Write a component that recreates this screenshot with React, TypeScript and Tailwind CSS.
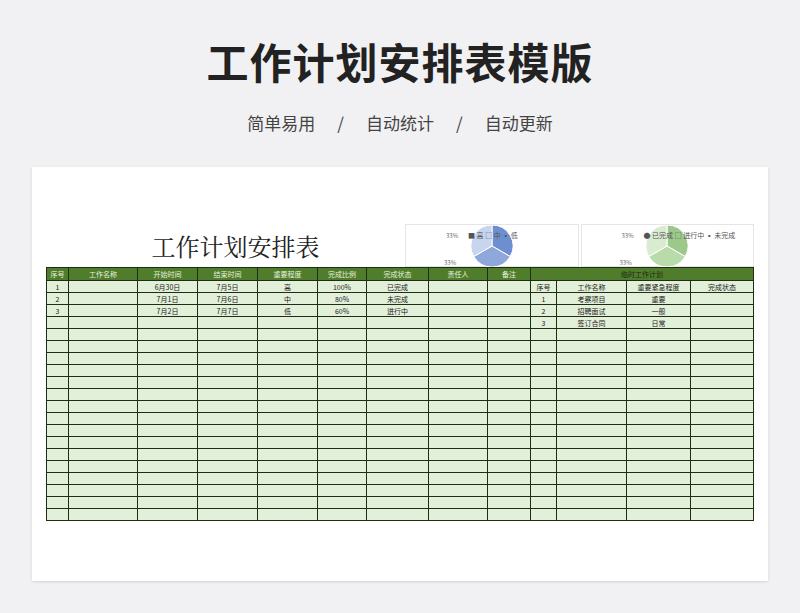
import React from "react";

const cols = [22, 69, 60, 60, 60, 49, 62, 59, 43, 26, 70, 64, 63];
const left = [
  ["1", "", "6月30日", "7月5日", "高", "100%", "已完成", "", ""],
  ["2", "", "7月1日", "7月6日", "中", "80%", "未完成", "", ""],
  ["3", "", "7月2日", "7月7日", "低", "60%", "进行中", "", ""],
];
const right = [
  ["序号", "工作名称", "重要紧急程度", "完成状态"],
  ["1", "考察项目", "重要", ""],
  ["2", "招聘面试", "一般", ""],
  ["3", "签订合同", "日常", ""],
];
const heads = ["序号", "工作名称", "开始时间", "结束时间", "重要程度", "完成比例", "完成状态", "责任人", "备注"];

function Pie({ colors, labels }: { colors: string[]; labels: string }) {
  return (
    <div className="relative flex-1 h-[43px] border border-[#e5e5e5] bg-white flex justify-center">
      <svg width="56" height="42" viewBox="0 0 56 42">
        <path d="M28 21 L28 0 A21 21 0 0 1 46.2 31.5 Z" fill={colors[0]} stroke="#fff" strokeWidth="1" />
        <path d="M28 21 L46.2 31.5 A21 21 0 0 1 9.8 31.5 Z" fill={colors[1]} stroke="#fff" strokeWidth="1" />
        <path d="M28 21 L9.8 31.5 A21 21 0 0 1 28 0 Z" fill={colors[2]} stroke="#fff" strokeWidth="1" />
      </svg>
      <span className="absolute left-[40px] top-[6px] text-[6px] text-[#666]">33%</span>
      <span className="absolute left-[38px] top-[33px] text-[6px] text-[#666]">33%</span>
      <span className="absolute left-[62px] top-[5px] text-[7px] text-[#555] whitespace-nowrap">{labels}</span>
    </div>
  );
}

export default function App() {
  const rows = 20;
  const cell = "border border-[#1f2d14] h-[12px] p-0 leading-[10px] text-center";
  return (
    <div className="w-[800px] h-[613px] bg-[#f1f1f3] flex flex-col items-center" style={{ fontFamily: '"Noto Sans CJK SC", sans-serif' }}>
      <h1 className="mt-[33px] text-[42px] font-bold text-[#222] leading-[56px] tracking-[1px]">工作计划安排表模版</h1>
      <div className="mt-[22px] text-[17px] text-[#444] flex gap-[22px] leading-[24px]">
        <span>简单易用</span><span>/</span><span>自动统计</span><span>/</span><span>自动更新</span>
      </div>
      <div className="mt-[32px] w-[736px] h-[414px] bg-white shadow-sm px-[14px] pt-[56px]" style={{ fontFamily: '"Noto Sans CJK SC", "Liberation Serif", serif' }}>
        <div className="flex items-end h-[44px]">
          <div className="w-[359px] text-[24px] text-[#222] text-center pl-[20px] leading-[30px] pb-[6px]" style={{ fontFamily: '"Noto Serif CJK SC", "Noto Sans CJK SC", serif' }}>工作计划安排表</div>
          <div className="flex flex-1 gap-[2px]">
            <Pie colors={["#6e8fcf", "#8ea8dc", "#c8d5ee"]} labels="■ 高 □ 中 ▪ 低" />
            <Pie colors={["#9cc98a", "#b9dba9", "#d9ecd0"]} labels="● 已完成 □ 进行中 ▪ 未完成" />
          </div>
        </div>
        <table className="border-collapse text-[7px] text-[#222] table-fixed" style={{ width: 707 }}>
          <colgroup>{cols.map((w, i) => <col key={i} style={{ width: w }} />)}</colgroup>
          <tbody>
            <tr className="bg-[#4f7d2c] text-[#e8f0de]">
              {heads.map((h, i) => <td key={i} className={`${cell} h-[13px]`}>{h}</td>)}
              <td colSpan={4} className={`${cell} h-[13px] text-[#1d2a12]`}>临时工作计划</td>
            </tr>
            {Array.from({ length: rows }).map((_, r) => (
              <tr key={r} className="bg-[#e2efd9]">
                {Array.from({ length: 9 }).map((_, c) => <td key={c} className={cell}>{left[r]?.[c] ?? ""}</td>)}
                {Array.from({ length: 4 }).map((_, c) => <td key={c} className={cell}>{right[r]?.[c] ?? ""}</td>)}
              </tr>
            ))}
          </tbody>
        </table>
      </div>
    </div>
  );
}
